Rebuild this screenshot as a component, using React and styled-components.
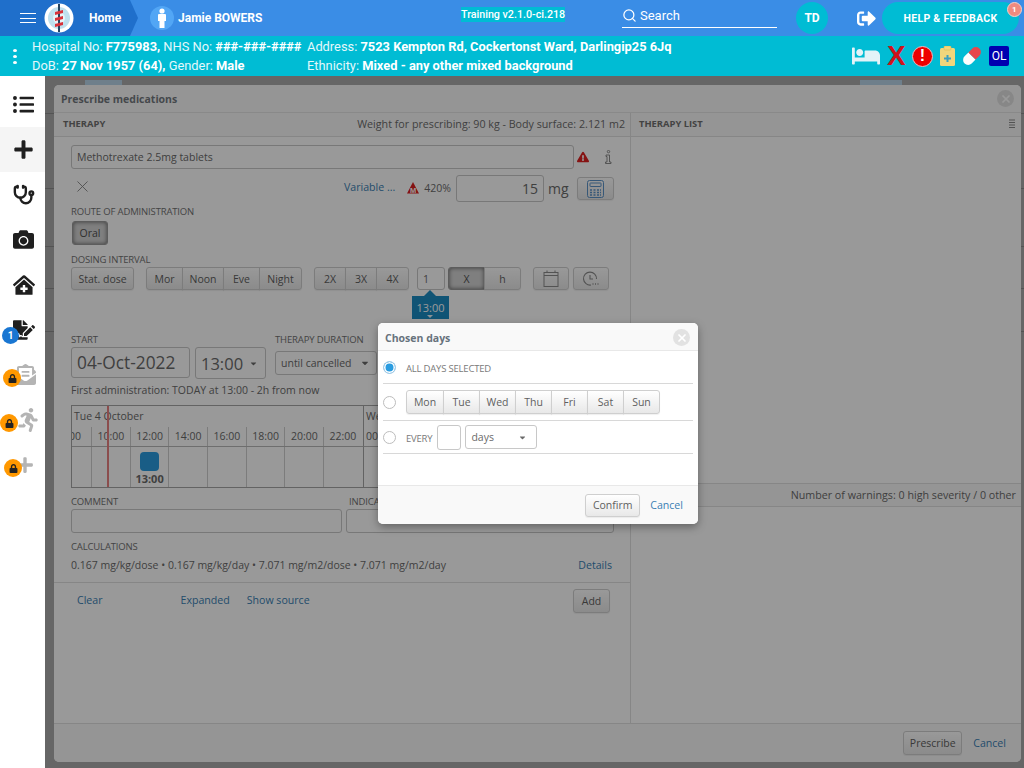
import React from "react";
import styled, { createGlobalStyle } from "styled-components";
import { Search, Stethoscope, X as XIcon } from "lucide-react";
import {
  FaListUl,
  FaPlus,
  FaCamera,
  FaClinicMedical,
  FaFileSignature,
  FaEnvelopeOpenText,
  FaRunning,
  FaLock,
  FaBed,
  FaSignOutAlt,
  FaExclamationTriangle,
  FaCaretDown,
} from "react-icons/fa";

const Global = createGlobalStyle`
  html, body { margin: 0; padding: 0; height: 100%; overflow: hidden; }
  body { font-family: "Open Sans", "Liberation Sans", sans-serif; background: #fff; }
  * { box-sizing: border-box; }
`;

const Page = styled.div`
  display: flex;
  flex-direction: column;
  width: 1024px;
  height: 768px;
`;

/* top bar */
const TopBar = styled.header`
  display: flex;
  align-items: center;
  height: 36px;
  background: #3a8de6;
  color: #fff;
  font-family: Roboto, sans-serif;
  position: relative;
`;
const HomePart = styled.div`
  display: flex;
  align-items: center;
  width: 138px;
  height: 36px;
  padding-left: 20px;
  background: #1f6fcb;
  clip-path: polygon(0 0, 130px 0, 138px 18px, 130px 36px, 0 36px);
`;
const Burger = styled.div`
  width: 16px;
  height: 10px;
  border-top: 1px solid #fff;
  border-bottom: 1px solid #fff;
  position: relative;
  &::after {
    content: "";
    position: absolute;
    left: 0;
    right: 0;
    top: 3.5px;
    border-top: 1px solid #fff;
  }
`;
const HomeText = styled.span`
  margin-left: 15px;
  font-size: 12px;
  font-weight: 700;
`;
const PersonCircle = styled.div`
  display: flex;
  align-items: center;
  justify-content: center;
  width: 24px;
  height: 24px;
  margin-left: 12px;
  border-radius: 50%;
  background: #52a6f5;
`;
const PatientName = styled.span`
  margin-left: 4px;
  width: 283px;
  font-size: 12px;
  font-weight: 700;
`;
const Version = styled.div`
  align-self: flex-start;
  margin-top: 7px;
  width: 104px;
  height: 15px;
  line-height: 15px;
  text-align: center;
  background: #00bcd4;
  font-size: 10.7px;
  font-weight: 500;
  white-space: nowrap;
`;
const SearchBox = styled.div`
  display: flex;
  align-items: center;
  gap: 3px;
  width: 155px;
  height: 21px;
  margin: -1px 0 0 57px;
  border-bottom: 1px solid #fff;
  font-size: 13px;
  padding-bottom: 4px;
`;
const Initials = styled.div`
  display: flex;
  align-items: center;
  justify-content: center;
  width: 32px;
  height: 32px;
  margin-left: 19px;
  border-radius: 50%;
  background: #00bcd4;
  font-size: 12px;
  font-weight: 700;
`;
const HelpPill = styled.div`
  display: flex;
  align-items: center;
  justify-content: center;
  width: 137px;
  height: 32px;
  margin-left: 6px;
  border-radius: 16px;
  background: #00bcd4;
  font-size: 10.5px;
  font-weight: 700;
  letter-spacing: 0.3px;
  position: relative;
`;
const HelpBadge = styled.span`
  position: absolute;
  top: 0;
  right: -3px;
  width: 15px;
  height: 15px;
  line-height: 14px;
  text-align: center;
  border-radius: 50%;
  background: #ef8a80;
  border: 1px solid #f6cfc9;
  font-size: 8px;
`;

/* patient strip */
const PatientBar = styled.div`
  display: flex;
  align-items: center;
  height: 40px;
  background: #00bcd4;
  color: #fff;
  font-family: Roboto, sans-serif;
  font-size: 12.85px;
`;
const Kebab = styled.div`
  display: flex;
  flex-direction: column;
  gap: 3px;
  margin-left: 13px;
  width: 19px;
  i {
    display: block;
    width: 4px;
    height: 3px;
    border-radius: 50%;
    background: #fff;
  }
`;
const InfoCol = styled.div`
  display: flex;
  flex-direction: column;
  width: ${(p) => p.$w}px;
  line-height: 19px;
  white-space: nowrap;
  color: #e4f8fb;
  b {
    color: #fff;
    font-weight: 700;
  }
`;
const StatusIcons = styled.div`
  display: flex;
  align-items: center;
  gap: 7px;
`;
const BigX = styled.span`
  font-family: "Liberation Sans", sans-serif;
  font-weight: 700;
  font-size: 28px;
  line-height: 24px;
  color: #d0121b;
  width: 18px;
  text-align: center;
`;
const AlertDot = styled.span`
  display: block;
  width: 21px;
  height: 21px;
  line-height: 18px;
  text-align: center;
  border-radius: 50%;
  background: #ee0000;
  border: 1px solid #f0b9c0;
  color: #fff;
  font-weight: 900;
  font-size: 16px;
  font-family: "Liberation Sans", sans-serif;
`;
const OlBox = styled.span`
  display: block;
  width: 20px;
  height: 20px;
  line-height: 20px;
  text-align: center;
  border-radius: 2px;
  background: #0000b0;
  color: #fff;
  font-size: 12px;
`;

/* page body */
const Body = styled.div`
  display: flex;
  flex: 1;
  min-height: 0;
`;
const Sidebar = styled.nav`
  width: 45px;
  padding-top: 6px;
  background: #fff;
`;
const NavItem = styled.div`
  display: flex;
  align-items: center;
  justify-content: center;
  height: 45px;
  padding-left: ${(p) => p.$pl || 2}px;
  font-size: 21px;
  color: ${(p) => (p.$off ? "#b4b4b4" : "#1f1f1f")};
  background: ${(p) => (p.$active ? "#f5f5f5" : "#fff")};
  position: relative;
`;
const NavBadge = styled.span`
  position: absolute;
  left: ${(p) => p.$x}px;
  top: ${(p) => p.$y}px;
  display: flex;
  align-items: center;
  justify-content: center;
  width: ${(p) => p.$size}px;
  height: ${(p) => p.$size}px;
  border-radius: 50%;
  background: ${(p) => (p.$blue ? "#1976d2" : "#ff9800")};
  color: ${(p) => (p.$blue ? "#fff" : "#222")};
  font-family: Roboto, sans-serif;
  font-size: 10px;
  font-weight: 700;
`;
const Main = styled.main`
  flex: 1;
  position: relative;
  overflow: hidden;
  background: #aaa;
`;
const BackRow = styled.div`
  height: ${(p) => p.$h}px;
  border-bottom: 1px solid #8b8b8b;
`;
const BackTab = styled.div`
  position: absolute;
  top: 4px;
  left: ${(p) => p.$x}px;
  width: ${(p) => p.$w}px;
  height: 5px;
  background: ${(p) => p.$c};
`;
const Dim = styled.div`
  position: absolute;
  inset: 0;
  background: rgba(0, 0, 0, 0.4);
`;

/* prescribe window */
const Modal = styled.section`
  position: absolute;
  left: 9px;
  top: 9px;
  right: 3px;
  bottom: 6px;
  display: flex;
  flex-direction: column;
  border-radius: 5px;
  background: #fff;
  color: #6b6b6b;
  font-size: 10.5px;
`;
const ModalTitle = styled.div`
  display: flex;
  align-items: center;
  justify-content: space-between;
  flex: 0 0 28px;
  padding: 0 7px;
  background: #f9f9f9;
  border-bottom: 1px solid #e5e5e5;
  border-radius: 5px 5px 0 0;
  color: #74797f;
  font-size: 10.5px;
  font-weight: 700;
`;
const CloseDot = styled.span`
  display: flex;
  align-items: center;
  justify-content: center;
  width: 17px;
  height: 17px;
  border-radius: 50%;
  background: #e2e2e2;
  color: #fff;
`;
const Columns = styled.div`
  display: grid;
  grid-template-columns: 577px 1fr;
  flex: 1;
  min-height: 0;
`;
const LeftCol = styled.div`
  display: flex;
  flex-direction: column;
  border-right: 1px solid #e0e0e0;
`;
const RightCol = styled.div`
  display: flex;
  flex-direction: column;
`;
const SubHead = styled.div`
  display: flex;
  align-items: center;
  justify-content: space-between;
  flex: 0 0 24px;
  padding: 0 5px 2px 8px;
  background: #f9f9f9;
  border-bottom: 1px solid #e0e0e0;
  font-size: 10.7px;
  white-space: nowrap;
  b {
    font-size: 9.4px;
    color: #707070;
    margin-left: ${(p) => p.$bl || 0}px;
  }
`;
const Form = styled.div`
  display: flex;
  flex-direction: column;
  padding: 0 16px 0 17px;
  border-bottom: 1px solid #e0e0e0;
  height: 446px;
`;
const Row = styled.div`
  display: flex;
  align-items: ${(p) => p.$align || "center"};
  margin-top: ${(p) => p.$top || 0}px;
  height: ${(p) => p.$h}px;
  position: relative;
`;
const Label = styled.div`
  margin-top: ${(p) => p.$top || 0}px;
  height: 12px;
  line-height: 12px;
  font-size: 9.5px;
  letter-spacing: -0.15px;
  color: #727272;
  white-space: nowrap;
`;
const Input = styled.div`
  display: flex;
  align-items: center;
  justify-content: ${(p) => (p.$right ? "flex-end" : "flex-start")};
  width: ${(p) => p.$w}px;
  height: ${(p) => p.$h || 24}px;
  margin-left: ${(p) => p.$ml || 0}px;
  margin-top: ${(p) => p.$mt || 0}px;
  padding: 0 5px;
  border: 1px solid #c8c8c8;
  border-radius: 3px;
  font-size: ${(p) => p.$fs || 10.5}px;
  color: #6a6a6a;
  white-space: nowrap;
`;
const Btn = styled.button`
  display: inline-flex;
  align-items: center;
  justify-content: center;
  width: ${(p) => p.$w}px;
  height: ${(p) => p.$h || 23}px;
  margin-left: ${(p) => p.$ml || 0}px;
  padding: 0;
  font: inherit;
  font-size: 10.5px;
  color: ${(p) => (p.$on ? "#505050" : "#5f5f5f")};
  border: 1px solid ${(p) => (p.$on ? "#9a9a9a" : "#cfcfcf")};
  border-radius: 3px;
  background: ${(p) =>
    p.$on ? "#d4d4d4" : "linear-gradient(#ffffff, #e8e8e8)"};
  box-shadow: ${(p) =>
    p.$on ? "inset 0 0 4px rgba(0, 0, 0, 0.55)" : "0 1px 1px rgba(0,0,0,.06)"};
`;
const Group = styled.div`
  display: flex;
  margin-left: ${(p) => p.$ml || 0}px;
  ${Btn} {
    border-radius: 0;
    margin-left: -1px;
  }
  ${Btn}:first-child {
    border-radius: 3px 0 0 3px;
    margin-left: 0;
  }
  ${Btn}:last-child {
    border-radius: 0 3px 3px 0;
  }
`;
const LinkText = styled.a`
  color: #3a7fb4;
  font-size: 10.6px;
  margin-left: ${(p) => p.$ml || 0}px;
  margin-bottom: ${(p) => p.$mb || 0}px;
  white-space: nowrap;
`;
const DoseInfo = styled.span`
  display: inline-flex;
  align-items: center;
  margin-left: 12px;
  margin-bottom: 2px;
  gap: 5px;
`;
const Unit = styled.span`
  margin-left: 4px;
  font-size: 14px;
`;
const Spacer = styled.span`
  display: block;
  width: ${(p) => p.$w}px;
`;
const Tip = styled.div`
  position: absolute;
  left: 341px;
  top: 29px;
  width: 37px;
  height: 23px;
  line-height: 24px;
  text-align: center;
  background: #1b8cc4;
  color: #fff;
  font-size: 11px;
  &::before {
    content: "";
    position: absolute;
    left: 12px;
    top: -6px;
    border: 6px solid transparent;
    border-top: 0;
    border-bottom-color: #1b8cc4;
  }
  &::after {
    content: "";
    position: absolute;
    left: 15px;
    bottom: 1px;
    border: 3px solid transparent;
    border-bottom: 0;
    border-top-color: #e8f4fa;
  }
`;
const FieldCol = styled.div`
  display: flex;
  flex-direction: column;
  gap: 1px;
  margin-left: ${(p) => p.$ml || 0}px;
`;
const SpreadRow = styled(Row)`
  justify-content: space-between;
  padding-right: 2px;
`;

/* timeline */
const Timeline = styled.div`
  display: grid;
  grid-template-columns: 291px 252px;
  grid-template-rows: 21px 20px 1fr;
  height: 83px;
  margin-top: 9px;
  border: 1px solid #a6a6a6;
  position: relative;
  overflow: hidden;
  font-size: 10.5px;
  color: #6a6a6a;
`;
const DayHead = styled.div`
  padding: 3px 0 0 2px;
  border-left: ${(p) => (p.$next ? "1px solid #a6a6a6" : "none")};
  white-space: nowrap;
`;
const Hours = styled.div`
  display: flex;
  border-bottom: ${(p) => (p.$slots ? "none" : "1px solid #b8b8b8")};
  border-left: ${(p) => (p.$next ? "1px solid #a6a6a6" : "none")};
`;
const Hour = styled.div`
  display: flex;
  justify-content: ${(p) => (p.$cut ? "flex-end" : p.$left ? "flex-start" : "center")};
  flex: 0 0 ${(p) => p.$w}px;
  padding: ${(p) => (p.$cut ? "0 10px 0 0" : p.$left ? "0 0 0 2px" : "0")};
  line-height: 19px;
  border-left: ${(p) => (p.$first ? "none" : "1px solid #cfcfcf")};
  overflow: hidden;
  white-space: nowrap;
`;
const Slot = styled.div`
  flex: 0 0 ${(p) => p.$w}px;
  display: flex;
  flex-direction: column;
  align-items: center;
  padding-top: 5px;
  border-left: ${(p) => (p.$first ? "none" : "1px solid #cfcfcf")};
`;
const Dose = styled.span`
  display: block;
  width: 19px;
  height: 19px;
  border-radius: 4px;
  background: #2a9ce0;
`;
const DoseTime = styled.b`
  margin-top: 1px;
  font-size: 11px;
  line-height: 14px;
`;
const NowLine = styled.div`
  position: absolute;
  left: 35px;
  top: 0;
  bottom: 0;
  width: 2px;
  background: #e88080;
`;
const ActionRow = styled.div`
  display: flex;
  align-items: center;
  height: 35px;
  padding: 0 20px 0 23px;
`;
const AddBtn = styled(Btn)`
  margin-left: auto;
`;
const WarnBar = styled.div`
  display: flex;
  align-items: center;
  justify-content: flex-end;
  flex: 0 0 24px;
  margin-top: 346px;
  padding-right: 5px;
  background: #f9f9f9;
  border-top: 1px solid #e0e0e0;
  border-bottom: 1px solid #e0e0e0;
  font-size: 10.7px;
  color: #6a6a6a;
`;
const ModalFoot = styled.div`
  display: flex;
  align-items: center;
  justify-content: flex-end;
  flex: 0 0 39px;
  gap: 11px;
  padding-right: 15px;
  border-top: 1px solid #e0e0e0;
  background: #f9f9f9;
  border-radius: 0 0 5px 5px;
`;

/* chosen days dialog */
const Dialog = styled.div`
  position: absolute;
  left: 333px;
  top: 247px;
  width: 320px;
  height: 201px;
  display: flex;
  flex-direction: column;
  border-radius: 5px;
  background: #fff;
  color: #6a6a6a;
  font-size: 10.5px;
  box-shadow: 0 3px 9px rgba(0, 0, 0, 0.35);
`;
const DialogHead = styled.div`
  display: flex;
  align-items: center;
  justify-content: space-between;
  flex: 0 0 28px;
  padding: 2px 8px 0 7px;
  background: #f9f9f9;
  border-bottom: 1px solid #e8e8e8;
  border-radius: 5px 5px 0 0;
  font-weight: 700;
  color: #67727c;
`;
const DialogBody = styled.div`
  flex: 1;
  padding: 0 5px;
`;
const DayRow = styled.div`
  display: flex;
  align-items: center;
  height: ${(p) => p.$h}px;
  padding-top: ${(p) => p.$pt || 0}px;
  border-bottom: 1px solid #d8d8d8;
`;
const Radio = styled.span`
  display: block;
  flex: 0 0 13px;
  width: 13px;
  height: 13px;
  margin-right: 10px;
  margin-top: ${(p) => p.$mt || 0}px;
  border-radius: 50%;
  border: 1px solid #bdbdbd;
  background: #fff;
  box-shadow: ${(p) => (p.$on ? "inset 0 0 0 1.5px #fff" : "none")};
  ${(p) => p.$on && "background: #2a9ce0; border-color: #a9cde6;"}
`;
const SmallCaps = styled.span`
  font-size: 9.5px;
  letter-spacing: -0.2px;
  color: #7a7a7a;
  margin-top: ${(p) => p.$mt || 0}px;
`;
const DialogFoot = styled.div`
  display: flex;
  align-items: center;
  justify-content: flex-end;
  flex: 0 0 39px;
  padding-right: 15px;
  gap: 10px;
  border-top: 1px solid #e8e8e8;
  background: #f9f9f9;
  border-radius: 0 0 5px 5px;
`;

const Logo = () => (
  <svg width="30" height="30" viewBox="0 0 30 30" style={{ marginLeft: 8 }}>
    <circle cx="15" cy="15" r="14.5" fill="#fff" />
    <circle cx="15" cy="15" r="11" fill="#bfe0ee" />
    <circle cx="15" cy="15" r="6" fill="#e7f3f8" />
    <rect x="14" y="1" width="2" height="28" fill="#23435f" />
    <path d="M11 9 L19 7 L19 10 L11 12Z M11 15 L19 13 L19 16 L11 18Z M11 21 L19 19 L19 22 L11 24Z" fill="#d8313a" />
  </svg>
);

const PersonIcon = () => (
  <svg width="10" height="20" viewBox="0 0 10 20" fill="#fff">
    <circle cx="5" cy="3" r="2.6" />
    <path d="M1 7 Q1 6 2 6 H8 Q9 6 9 7 V13 H7.5 V20 H2.5 V13 H1Z" />
  </svg>
);

const Clipboard = () => (
  <svg width="15" height="20" viewBox="0 0 15 20">
    <rect x="0" y="2" width="15" height="18" rx="1.5" fill="#f2d67c" />
    <rect x="4" y="0" width="7" height="4" rx="1" fill="#f2d67c" stroke="#dcb84e" strokeWidth="0.6" />
    <path d="M6.5 9 h2 v2.5 h2.5 v2 h-2.5 v2.5 h-2 v-2.5 h-2.5 v-2 h2.5z" fill="#3c9fc0" />
  </svg>
);

const Capsule = () => (
  <svg width="20" height="20" viewBox="0 0 20 20">
    <g transform="rotate(-45 10 10)">
      <path d="M10 5 H4.5 A5 5 0 0 0 4.5 15 H10Z" fill="#fdfdfd" />
      <path d="M10 5 H15.5 A5 5 0 0 1 15.5 15 H10Z" fill="#e8474c" />
    </g>
  </svg>
);

const InfoGlyph = () => (
  <svg width="8" height="14" viewBox="0 0 8 14" fill="none" stroke="#808080" strokeWidth="0.9">
    <circle cx="4.5" cy="1.6" r="1.2" />
    <path d="M2 5 H5.5 V12 H7 V13.5 H1.5 V12 H3 V6.5 H2Z" />
  </svg>
);

const DoseWarn = () => (
  <svg width="12" height="12" viewBox="0 0 12 12">
    <path d="M6 0 L12 11.5 H0Z" fill="#dd1f1f" />
    <text x="6" y="10.5" textAnchor="middle" fontSize="7.5" fontWeight="700" fill="#fff" fontFamily="Liberation Sans">M</text>
  </svg>
);

const CalcGlyph = () => (
  <svg width="17" height="18" viewBox="0 0 17 18" fill="none" stroke="#5c93c8" strokeWidth="1">
    <rect x="0.5" y="0.5" width="16" height="17" rx="2" />
    <rect x="3" y="3" width="11" height="3.5" rx="0.5" />
    <path d="M3 10 h2 m1.5 0 h2 m1.5 0 h2 m1 0 h1 M3 12.5 h2 m1.5 0 h2 m1.5 0 h2 m1 0 h1 M3 15 h2 m1.5 0 h2 m1.5 0 h2 m1 0 h1" strokeWidth="1.4" />
  </svg>
);

const CalGlyph = () => (
  <svg width="16" height="17" viewBox="0 0 16 17" fill="none" stroke="#8a8a8a" strokeWidth="1">
    <rect x="1" y="2.5" width="14" height="14" />
    <path d="M1 5.5 H15" />
    <path d="M4 0.5 V3 M12 0.5 V3" />
  </svg>
);

const ClockGlyph = () => (
  <svg width="18" height="16" viewBox="0 0 18 16" fill="none" stroke="#8a8a8a" strokeWidth="1.1">
    <path d="M9 14 A6.5 6.5 0 1 1 14.5 8" />
    <path d="M8 4 V8 H11" />
    <path d="M10.5 13 h1 m1.5 0 h1 m1.5 0 h1" strokeWidth="1.5" />
  </svg>
);

const LinesGlyph = () => (
  <svg width="8" height="9" viewBox="0 0 8 9" stroke="#8a8a8a" strokeWidth="1">
    <path d="M1 1 H7 M1 3.5 H7 M1 6 H7 M1 8.5 H7" />
  </svg>
);

const hoursA = ["00", "10:00", "12:00", "14:00", "16:00", "18:00", "20:00", "22:00"];
const days = ["Mon", "Tue", "Wed", "Thu", "Fri", "Sat", "Sun"];

const App = () => (
  <Page>
    <Global />
    <TopBar>
      <HomePart>
        <Burger />
        <Logo />
        <HomeText>Home</HomeText>
      </HomePart>
      <PersonCircle>
        <PersonIcon />
      </PersonCircle>
      <PatientName>Jamie BOWERS</PatientName>
      <Version>Training v2.1.0-ci.218</Version>
      <SearchBox>
        <Search size={15} strokeWidth={2} />
        Search
      </SearchBox>
      <Initials>TD</Initials>
      <FaSignOutAlt size={19} style={{ marginLeft: 29 }} />
      <HelpPill>
        HELP &amp; FEEDBACK
        <HelpBadge>1</HelpBadge>
      </HelpPill>
    </TopBar>

    <PatientBar>
      <Kebab>
        <i />
        <i />
        <i />
      </Kebab>
      <InfoCol $w={275}>
        <span>
          Hospital No: <b>F775983,</b> NHS No: <b>###-###-####</b>
        </span>
        <span>
          DoB: <b>27 Nov 1957 (64),</b> Gender: <b>Male</b>
        </span>
      </InfoCol>
      <InfoCol $w={545}>
        <span>
          Address: <b>7523 Kempton Rd, Cockertonst Ward, Darlingip25 6Jq</b>
        </span>
        <span>
          Ethnicity: <b>Mixed - any other mixed background</b>
        </span>
      </InfoCol>
      <StatusIcons>
        <FaBed size={28} color="#e3f3f8" />
        <BigX>X</BigX>
        <AlertDot>!</AlertDot>
        <Clipboard />
        <Capsule />
        <OlBox>OL</OlBox>
      </StatusIcons>
    </PatientBar>

    <Body>
      <Sidebar>
        <NavItem>
          <FaListUl />
        </NavItem>
        <NavItem $active>
          <FaPlus />
        </NavItem>
        <NavItem>
          <Stethoscope size={22} strokeWidth={2.6} />
        </NavItem>
        <NavItem>
          <FaCamera />
        </NavItem>
        <NavItem>
          <FaClinicMedical size={22} />
        </NavItem>
        <NavItem>
          <FaFileSignature size={22} />
          <NavBadge $blue $size={17} $x={2} $y={20}>
            1
          </NavBadge>
        </NavItem>
        <NavItem $off $pl={6}>
          <FaEnvelopeOpenText />
          <NavBadge $size={18} $x={3} $y={17}>
            <FaLock size={9} />
          </NavBadge>
        </NavItem>
        <NavItem $off $pl={10}>
          <FaRunning size={24} />
          <NavBadge $size={18} $x={0} $y={17}>
            <FaLock size={9} />
          </NavBadge>
        </NavItem>
        <NavItem $off $pl={5}>
          <FaPlus size={18} />
          <NavBadge $size={18} $x={4} $y={17}>
            <FaLock size={9} />
          </NavBadge>
        </NavItem>
      </Sidebar>

      <Main>
        <BackRow $h={38} />
        <BackRow $h={75} />
        <BackRow $h={58} />
        <BackRow $h={42} />
        <BackRow $h={43} />
        <BackTab $x={40} $w={37} $c="#b8d4e8" />
        <BackTab $x={815} $w={42} $c="#b8d4e8" />
        <Modal>
          <ModalTitle>
            Prescribe medications
            <CloseDot>
              <XIcon size={12} strokeWidth={3.5} />
            </CloseDot>
          </ModalTitle>
          <Columns>
            <LeftCol>
              <SubHead $bl={1}>
                <b>THERAPY</b>
                Weight for prescribing: 90 kg - Body surface: 2.121 m2
              </SubHead>
              <Form>
                <Row $top={8} $h={24}>
                  <Input $w={503}>Methotrexate 2.5mg tablets</Input>
                  <FaExclamationTriangle size={12} color="#e02020" style={{ marginLeft: 3 }} />
                  <Spacer $w={15} />
                  <InfoGlyph />
                </Row>
                <Row $top={6} $h={27}>
                  <XIcon size={19} strokeWidth={1.1} color="#808080" style={{ margin: "0 0 4px 2px" }} />
                  <LinkText $ml={252} $mb={3}>
                    Variable ...
                  </LinkText>
                  <DoseInfo>
                    <DoseWarn />
                    420%
                  </DoseInfo>
                  <Input $w={88} $h={27} $ml={5} $right $fs={14}>
                    15
                  </Input>
                  <Unit>mg</Unit>
                  <Btn $w={37} $ml={8}>
                    <CalcGlyph />
                  </Btn>
                </Row>
                <Label $top={4}>ROUTE OF ADMINISTRATION</Label>
                <Row $top={3} $h={24}>
                  <Btn $on $w={36} $h={24} $ml={1}>
                    Oral
                  </Btn>
                </Row>
                <Label $top={9}>DOSING INTERVAL</Label>
                <Row $top={1} $h={23}>
                  <Btn $w={63}>Stat. dose</Btn>
                  <Group $ml={12}>
                    <Btn $w={37}>Mor</Btn>
                    <Btn $w={42}>Noon</Btn>
                    <Btn $w={37}>Eve</Btn>
                    <Btn $w={43}>Night</Btn>
                  </Group>
                  <Group $ml={12}>
                    <Btn $w={32}>2X</Btn>
                    <Btn $w={32}>3X</Btn>
                    <Btn $w={33}>4X</Btn>
                  </Group>
                  <Input $w={28} $h={23} $ml={8}>
                    1
                  </Input>
                  <Group $ml={3}>
                    <Btn $on $w={37}>
                      X
                    </Btn>
                    <Btn $w={37}>h</Btn>
                  </Group>
                  <Btn $w={36} $ml={12}>
                    <CalGlyph />
                  </Btn>
                  <Btn $w={36} $ml={4}>
                    <ClockGlyph />
                  </Btn>
                  <Tip>13:00</Tip>
                </Row>
                <Row $top={44} $h={46} $align="flex-start">
                  <FieldCol>
                    <Label>START</Label>
                    <Input $w={119} $h={31} $fs={17.3}>
                      04-Oct-2022
                    </Input>
                  </FieldCol>
                  <FieldCol $ml={5}>
                    <Label />
                    <Input $w={71} $h={32} $fs={16.5}>
                      13:00
                      <FaCaretDown size={9} style={{ marginLeft: 6 }} />
                    </Input>
                  </FieldCol>
                  <FieldCol $ml={9}>
                    <Label>THERAPY DURATION</Label>
                    <Input $w={102} $h={24} $mt={4}>
                      until cancelled
                      <FaCaretDown size={10} style={{ marginLeft: 8 }} />
                    </Input>
                  </FieldCol>
                </Row>
                <Row $top={4} $h={12}>
                  First administration: TODAY at 13:00 - 2h from now
                </Row>
                <Timeline>
                  <DayHead>Tue 4 October</DayHead>
                  <DayHead $next>Wed</DayHead>
                  <Hours>
                    {hoursA.map((h, i) => (
                      <Hour key={h} $first={i === 0} $cut={i === 0} $w={i === 0 ? 19 : 38.7}>
                        {h}
                      </Hour>
                    ))}
                  </Hours>
                  <Hours $next>
                    <Hour $first $left $w={38.7}>
                      00
                    </Hour>
                  </Hours>
                  <Hours $slots>
                    {hoursA.map((h, i) => (
                      <Slot key={h} $first={i === 0} $w={i === 0 ? 19 : 38.7}>
                        {h === "12:00" && (
                          <>
                            <Dose />
                            <DoseTime>13:00</DoseTime>
                          </>
                        )}
                      </Slot>
                    ))}
                  </Hours>
                  <Hours $next $slots />
                  <NowLine />
                </Timeline>
                <Row $top={8} $h={12}>
                  <Label>COMMENT</Label>
                  <Label style={{ marginLeft: 231 }}>INDICATION</Label>
                </Row>
                <Row $top={1} $h={24}>
                  <Input $w={271} />
                  <Input $w={268} $ml={4} />
                </Row>
                <Label $top={8}>CALCULATIONS</Label>
                <SpreadRow $top={5} $h={14}>
                  <span>0.167 mg/kg/dose • 0.167 mg/kg/day • 7.071 mg/m2/dose • 7.071 mg/m2/day</span>
                  <LinkText>Details</LinkText>
                </SpreadRow>
              </Form>
              <ActionRow>
                <LinkText $mb={2}>Clear</LinkText>
                <LinkText $ml={78} $mb={2}>
                  Expanded
                </LinkText>
                <LinkText $ml={17} $mb={2}>
                  Show source
                </LinkText>
                <AddBtn $w={37} $h={24}>
                  Add
                </AddBtn>
              </ActionRow>
            </LeftCol>
            <RightCol>
              <SubHead>
                <b>THERAPY LIST</b>
                <LinesGlyph />
              </SubHead>
              <WarnBar>Number of warnings: 0 high severity / 0 other</WarnBar>
            </RightCol>
          </Columns>
          <ModalFoot>
            <Btn $w={59} $h={24}>
              Prescribe
            </Btn>
            <LinkText>Cancel</LinkText>
          </ModalFoot>
        </Modal>
        <Dim />
        <Dialog>
          <DialogHead>
            Chosen days
            <CloseDot>
              <XIcon size={12} strokeWidth={3.5} />
            </CloseDot>
          </DialogHead>
          <DialogBody>
            <DayRow $h={33} $pt={3}>
              <Radio $on $mt={-2} />
              <SmallCaps>ALL DAYS SELECTED</SmallCaps>
            </DayRow>
            <DayRow $h={37}>
              <Radio />
              <Group>
                {days.map((d, i) => (
                  <Btn key={d} $w={i === 0 ? 38 : 37} $h={24}>
                    {d}
                  </Btn>
                ))}
              </Group>
            </DayRow>
            <DayRow $h={33}>
              <Radio />
              <SmallCaps $mt={3}>EVERY</SmallCaps>
              <Input $w={24} $h={25} $ml={5} />
              <Input $w={72} $h={24} $ml={4}>
                days
                <FaCaretDown size={9} style={{ marginLeft: "auto", marginRight: 4 }} />
              </Input>
            </DayRow>
          </DialogBody>
          <DialogFoot>
            <Btn $w={55} $h={23}>
              Confirm
            </Btn>
            <LinkText>Cancel</LinkText>
          </DialogFoot>
        </Dialog>
      </Main>
    </Body>
  </Page>
);

export default App;
